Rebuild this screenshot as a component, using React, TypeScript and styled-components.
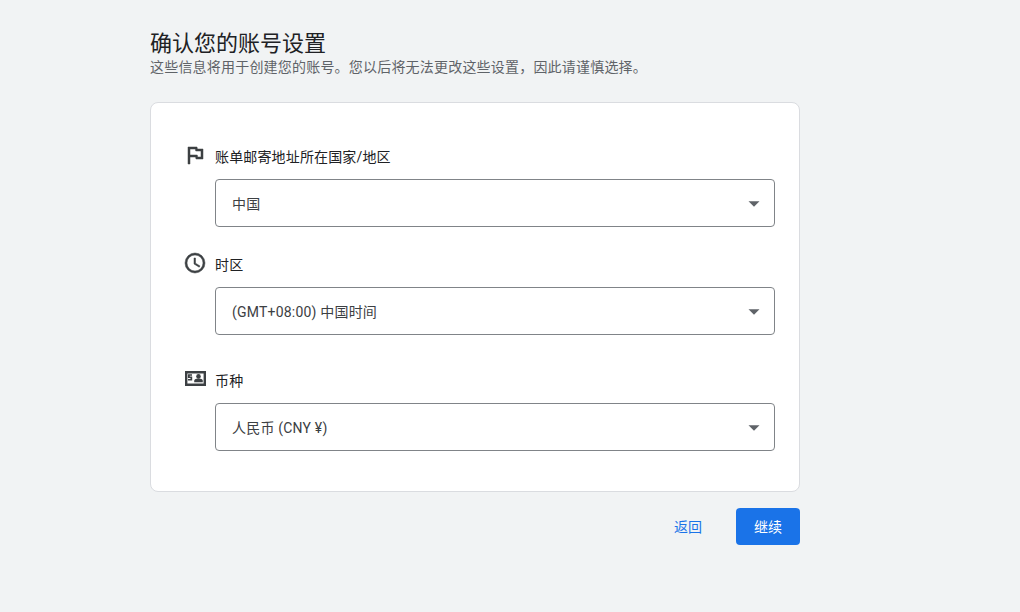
import React from 'react';
import styled, { createGlobalStyle } from 'styled-components';

const GlobalStyle = createGlobalStyle`
  * { box-sizing: border-box; }
  body {
    margin: 0;
    background: #f1f3f4;
    font-family: Roboto, 'Noto Sans CJK SC', sans-serif;
    font-size: 14px;
    color: #202124;
  }
`;

const Page = styled.main`
  min-height: 612px;
  padding: 30px 0 0 150px;
`;

const Content = styled.div`
  width: 650px;
`;

const Title = styled.h1`
  margin: 0;
  font-size: 22px;
  font-weight: 400;
  line-height: 28px;
`;

const Subtitle = styled.p`
  margin: 0;
  color: #5f6368;
  letter-spacing: 0.2px;
  line-height: 18px;
  white-space: nowrap;
`;

const Card = styled.section`
  display: flex;
  flex-direction: column;
  height: 390px;
  margin-top: 26px;
  padding: 40px 24px 0 32px;
  background: #fff;
  border: 1px solid #dadce0;
  border-radius: 8px;
`;

const Field = styled.div<{ $gap: number }>`
  display: grid;
  grid-template-columns: 32px 560px;
  margin-bottom: ${({ $gap }) => $gap}px;
`;

const Icon = styled.svg`
  display: block;
  width: 24px;
  height: 24px;
  fill: #3c4043;
  stroke: #3c4043;
  stroke-width: 0.5;
`;

const Label = styled.label`
  height: 36px;
  padding-top: 4px;
  line-height: 20px;
  letter-spacing: 0.15px;
`;

const Select = styled.button`
  display: flex;
  grid-column: 2;
  align-items: center;
  justify-content: space-between;
  height: 48px;
  padding: 0 14px 1px 16px;
  background: #fff;
  border: 1px solid #808488;
  border-radius: 4px;
  color: #3c4043;
  font: inherit;
  letter-spacing: 0.2px;
`;

const Arrow = styled.svg`
  width: 12px;
  height: 6px;
  margin-top: 2px;
  fill: #5f6368;
`;

const Actions = styled.footer`
  display: flex;
  justify-content: flex-end;
  gap: 16px;
  margin-top: 16px;
`;

const Button = styled.button<{ $primary?: boolean }>`
  height: 37px;
  padding: 0 18px 1px;
  border: 0;
  border-radius: 4px;
  background: ${({ $primary }) => ($primary ? '#1a73e8' : 'transparent')};
  color: ${({ $primary }) => ($primary ? '#fff' : '#1a73e8')};
  font: inherit;
`;

type SettingProps = { icon: React.ReactNode; label: string; value: string; gap: number };

const Setting = ({ icon, label, value, gap }: SettingProps) => (
  <Field $gap={gap}>
    <Icon viewBox="0 0 24 24">{icon}</Icon>
    <Label>{label}</Label>
    <Select>
      {value}
      <Arrow viewBox="0 0 12 6"><path d="M0.5 0.2h11L6 5.8z" /></Arrow>
    </Select>
  </Field>
);

const flag = <path d="M12.36 6l.4 2H18v6h-3.36l-.4-2H7V6h5.36M14 4H5v17h2v-7h5.6l.4 2h7V6h-5.6L14 4z" />;

const clock = (
  <path d="M12 2a10 10 0 1 0 0 20 10 10 0 0 0 0-20zm0 18a8 8 0 1 1 0-16 8 8 0 0 1 0 16zm.5-13H11v6l5.2 3.2.8-1.3-4.5-2.7z" />
);

const billing = (
  <g stroke="none">
    <path fillRule="evenodd" d="M2 4h21v15H2zM4.4 6.4v10.2h16.2V6.4z" />
    <path d="M5 7.2h4v1.5H6.7v.9H9.2v3.8H5v-1.5h2.5v-.9H5z" />
    <circle cx="15.5" cy="9.4" r="2.3" />
    <path d="M11.2 15.2v-1.4c0-1.6 2-2.4 4.3-2.4s4.3.8 4.3 2.4v1.4z" />
  </g>
);

export default function App() {
  return (
    <>
      <GlobalStyle />
      <Page>
        <Content>
          <Title>确认您的账号设置</Title>
          <Subtitle>这些信息将用于创建您的账号。您以后将无法更改这些设置，因此请谨慎选择。</Subtitle>
          <Card>
            <Setting icon={flag} label="账单邮寄地址所在国家/地区" value="中国" gap={24} />
            <Setting icon={clock} label="时区" value="(GMT+08:00) 中国时间" gap={32} />
            <Setting icon={billing} label="币种" value="人民币 (CNY ¥)" gap={0} />
          </Card>
          <Actions>
            <Button>返回</Button>
            <Button $primary>继续</Button>
          </Actions>
        </Content>
      </Page>
    </>
  );
}
